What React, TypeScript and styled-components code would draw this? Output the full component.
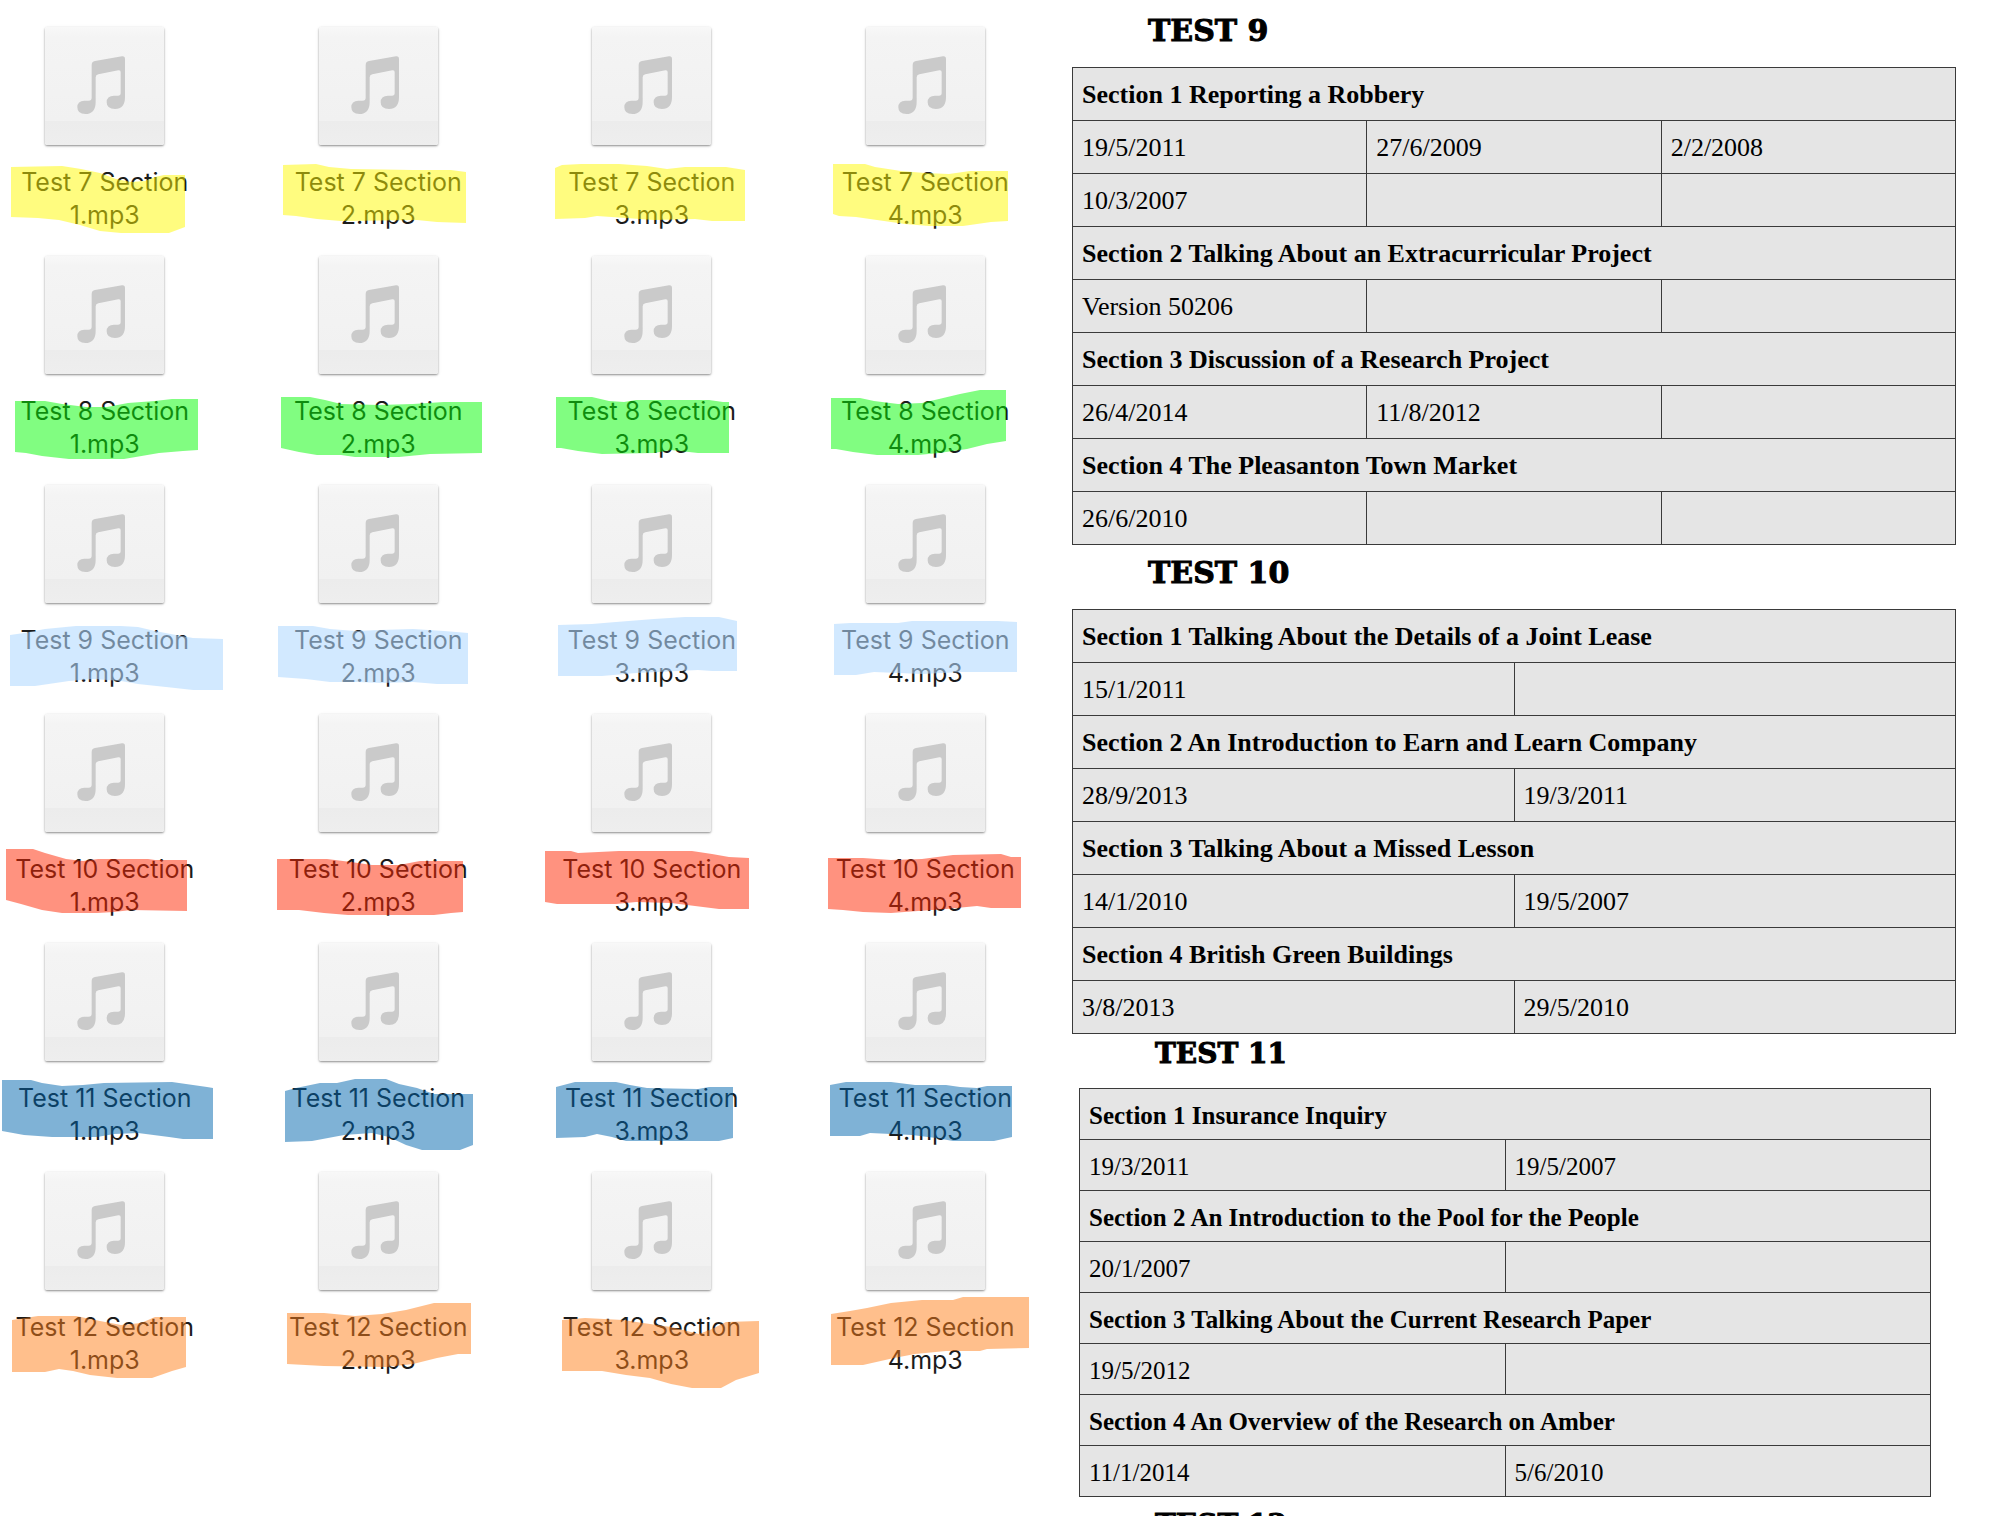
import React from 'react';
import styled, { createGlobalStyle } from 'styled-components';

const GlobalStyle = createGlobalStyle`
  *, *::before, *::after { box-sizing: border-box; }
  body { margin: 0; background: #ffffff; }
`;

const Page = styled.main`
  display: grid;
  grid-template-columns: 1030fr 884fr;
  column-gap: 42px;
  height: 100vh;
  padding-right: 45px;
  overflow: hidden;
  background: #ffffff;
`;

const FileGrid = styled.ul`
  display: grid;
  grid-template-columns: repeat(4, minmax(0, 1fr));
  gap: 24px 64px;
  align-content: start;
  margin: 0;
  padding: 27px 0 0;
  list-style: none;
`;

const FileTile = styled.li`
  position: relative;
  display: flex;
  flex-direction: column;
  align-items: center;
  gap: 21px;
`;

const Thumbnail = styled.div`
  width: 119px;
  height: 118px;
  border-radius: 2px;
  background: linear-gradient(
    to bottom,
    #f8f8f8 0,
    #f4f4f4 10px,
    #f1f1f1 94px,
    #ececec 94px,
    #eeeeee 118px
  );
  box-shadow: 0 1px 2px rgba(0, 0, 0, 0.4), 0 1px 4px rgba(0, 0, 0, 0.08);
`;

const NoteDrawing = styled.svg`
  display: block;
  width: 100%;
  height: 100%;
  fill: #cacaca;
`;

const FileName = styled.span`
  color: #1b1b1b;
  font: 400 25px/33px Inter, 'Liberation Sans', sans-serif;
  text-align: center;
`;

const FileLine = styled.span`
  display: block;
  white-space: nowrap;
`;

const Marker = styled.svg<{ $ink: string }>`
  position: absolute;
  top: 0;
  left: 50%;
  width: 1px;
  height: 1px;
  overflow: visible;
  pointer-events: none;
  fill: ${(p) => p.$ink};
`;

const Schedule = styled.div`
  display: flex;
  flex-direction: column;
  gap: 10px;
  padding-top: 13px;
`;

const Sheet = styled.section<{ $narrow: boolean }>`
  padding: ${(p) => (p.$narrow ? '0 25px 0 7px' : '0')};
`;

const TightGroup = styled.div`
  display: flex;
  flex-direction: column;
  gap: 2px;
`;

const SheetTitle = styled.h2<{ $narrow: boolean }>`
  margin: 0 0 ${(p) => (p.$narrow ? 16 : 18)}px;
  padding-left: 76px;
  color: #000000;
  font: 700 ${(p) => (p.$narrow ? 28 : 30)}px/36px 'DejaVu Serif', serif;
  -webkit-text-stroke: 1px #000000;
`;

const DateTable = styled.table<{ $narrow: boolean }>`
  width: 100%;
  table-layout: fixed;
  border-collapse: collapse;
  border: 1px solid #111111;
  background: #e5e5e5;
  color: #000000;
  font-family: 'Liberation Serif', 'Times New Roman', serif;
  font-size: ${(p) => (p.$narrow ? 25 : 26)}px;
  line-height: ${(p) => (p.$narrow ? 29 : 30)}px;

  th,
  td {
    height: ${(p) => (p.$narrow ? 51 : 53)}px;
    padding: ${(p) => (p.$narrow ? '12px 9px 9px' : '12px 9px 10px')};
    border: 1px solid #3a3a3a;
    text-align: left;
  }
`;

const SectionCell = styled.th`
  font-weight: 700;
`;

const DateCell = styled.td`
  font-weight: 400;
`;

type FileRow = { test: number; ink: string; strokes: string[] };

/* Highlighter outlines; x is measured from the tile's centre, y from its top. */
const fileRows: FileRow[] = [
  {
    test: 7,
    ink: 'rgba(255, 250, 0, 0.5)',
    strokes: [
      '-94,140 -43,139 -24,142 -5,146 11,152 26,155 40,154 50,150 59,148 80,148 80,200 64,206 16,206 -5,204 -25,198 -46,193 -67,191 -94,190',
      '-95,138 -62,137 -49,140 -27,142 35,143 73,143 88,145 88,196 59,195 39,193 -37,194 -61,192 -82,189 -95,188',
      '-97,141 -90,138 -71,137 -33,137 -5,139 15,142 33,140 74,140 93,143 93,194 60,194 43,192 2,193 -26,191 -55,189 -67,191 -97,192',
      '-92,137 -60,137 -50,140 -24,144 0,146 24,147 45,144 83,144 83,194 66,195 38,199 4,199 -20,197 -48,193 -69,190 -86,189 -92,187',
    ],
  },
  {
    test: 8,
    ink: 'rgba(4, 252, 4, 0.5)',
    strokes: [
      '-90,145 -60,145 -43,148 -19,151 2,151 23,147 50,145 67,143 93,143 93,194 78,195 54,197 19,203 -36,203 -63,200 -79,197 -90,196',
      '-97,141 -68,141 -53,144 -37,148 1,149 35,148 66,146 104,146 104,197 52,198 21,201 -23,201 -37,199 -61,199 -79,196 -97,192',
      '-96,141 -60,141 -43,145 -28,146 -16,144 57,144 71,146 77,146 77,197 46,197 19,194 2,197 -50,198 -74,195 -91,192 -96,192',
      '-94,142 -65,142 -51,145 -27,148 -3,147 14,143 35,138 55,134 81,134 81,185 62,188 42,193 14,197 -7,199 -48,199 -72,196 -89,193 -94,193',
    ],
  },
  {
    test: 9,
    ink: 'rgba(178, 217, 255, 0.58)',
    strokes: [
      '-95,150 -81,148 -60,144 -29,141 16,141 33,142 50,146 71,150 88,153 118,154 118,205 88,205 61,202 33,199 16,196 -12,194 -36,196 -70,201 -95,201',
      '-100,141 -65,141 -48,144 -23,146 1,145 35,144 66,146 90,148 90,199 59,199 35,197 4,198 -20,197 -48,197 -72,194 -100,192',
      '-94,140 -60,139 -36,137 2,134 33,132 67,132 85,136 85,186 60,186 46,185 26,186 -16,188 -50,191 -94,191',
      '-91,139 -75,138 -27,138 -13,136 73,136 92,137 92,187 38,187 -3,189 -51,187 -69,190 -91,190',
    ],
  },
  {
    test: 10,
    ink: 'rgba(255, 38, 0, 0.5)',
    strokes: [
      '-99,135 -72,135 -60,139 -39,145 -22,147 -7,145 43,145 50,146 82,146 82,197 26,196 9,198 -8,199 -43,199 -63,196 -84,190 -99,186',
      '-101,145 -51,145 -27,148 -6,151 21,151 42,147 85,147 85,198 73,199 56,201 -30,201 -54,199 -79,196 -101,196',
      '-107,137 -81,137 -74,139 -33,137 40,137 60,140 77,143 97,144 97,195 67,195 43,192 19,189 -16,188 -36,190 -95,190 -107,188',
      '-97,144 -62,144 -34,146 -3,145 28,141 76,140 86,143 96,143 96,194 66,194 52,192 21,195 -7,197 -34,199 -62,198 -82,196 -97,195',
    ],
  },
  {
    test: 11,
    ink: 'rgba(0, 101, 173, 0.5)',
    strokes: [
      '-103,137 -74,137 -63,140 -43,143 -22,142 -1,140 67,139 88,142 102,144 108,145 108,196 78,196 64,194 33,190 9,191 -8,194 -53,194 -81,192 -103,188',
      '-93,148 -82,145 -58,140 -41,140 -23,136 8,136 21,141 39,145 56,151 95,151 95,202 82,207 44,207 28,202 11,194 -6,190 -34,192 -66,198 -93,199',
      '-96,144 -77,139 -36,139 -22,142 -5,145 46,146 57,144 81,144 81,195 67,198 -26,198 -40,194 -55,191 -67,194 -96,195',
      '-95,142 -79,139 -34,139 -10,142 21,142 35,144 52,145 62,143 87,143 87,194 69,198 28,198 11,195 -13,192 -55,190 -65,193 -95,193',
    ],
  },
  {
    test: 12,
    ink: 'rgba(255, 127, 26, 0.5)',
    strokes: [
      '-93,148 -67,144 -29,144 -5,149 16,153 36,151 50,145 81,145 81,195 67,199 47,206 12,206 -15,203 -32,199 -46,197 -60,200 -93,200',
      '-91,141 -54,141 -23,144 4,142 28,138 56,131 93,131 93,182 80,182 59,186 35,192 8,195 -54,194 -91,192',
      '-90,148 -67,146 -29,148 -9,151 19,155 47,162 60,157 74,150 107,149 107,201 84,208 69,216 40,216 19,212 -2,206 -26,203 -50,199 -90,199',
      '-94,142 -75,139 -58,136 -34,131 -3,128 28,128 38,125 104,125 104,176 62,177 55,179 21,179 -10,182 -31,186 -62,193 -94,193',
    ],
  },
];

type SheetData = {
  title: string;
  columns: number;
  narrow?: boolean;
  sections: { name: string; rows: string[][] }[];
};

const test9: SheetData = {
  title: 'TEST 9',
  columns: 3,
  sections: [
    { name: 'Section 1 Reporting a Robbery', rows: [['19/5/2011', '27/6/2009', '2/2/2008'], ['10/3/2007']] },
    { name: 'Section 2 Talking About an Extracurricular Project', rows: [['Version 50206']] },
    { name: 'Section 3 Discussion of a Research Project', rows: [['26/4/2014', '11/8/2012']] },
    { name: 'Section 4 The Pleasanton Town Market', rows: [['26/6/2010']] },
  ],
};

const test10: SheetData = {
  title: 'TEST 10',
  columns: 2,
  sections: [
    { name: 'Section 1 Talking About the Details of a Joint Lease', rows: [['15/1/2011']] },
    { name: 'Section 2 An Introduction to Earn and Learn Company', rows: [['28/9/2013', '19/3/2011']] },
    { name: 'Section 3 Talking About a Missed Lesson', rows: [['14/1/2010', '19/5/2007']] },
    { name: 'Section 4 British Green Buildings', rows: [['3/8/2013', '29/5/2010']] },
  ],
};

const test11: SheetData = {
  title: 'TEST 11',
  columns: 2,
  narrow: true,
  sections: [
    { name: 'Section 1 Insurance Inquiry', rows: [['19/3/2011', '19/5/2007']] },
    { name: 'Section 2 An Introduction to the Pool for the People', rows: [['20/1/2007']] },
    { name: 'Section 3 Talking About the Current Research Paper', rows: [['19/5/2012']] },
    { name: 'Section 4 An Overview of the Research on Amber', rows: [['11/1/2014', '5/6/2010']] },
  ],
};

const test12: SheetData = { title: 'TEST 12', columns: 2, narrow: true, sections: [] };

function MusicNote() {
  return (
    <NoteDrawing viewBox="0 0 357 354" aria-hidden="true">
      <path d="M140 114 Q140 104 150 102 L231 88 Q240 87 240 96 L240 210 Q240 246 210 246 Q185 246 185 226 Q185 206 207 206 L219 206 Q227 206 227 198 L227 135 Q227 129 220 130 L160 142 Q152 144 152 151 L152 224 Q152 261 121 261 Q97 261 97 241 Q97 221 118 221 L131 221 Q140 221 140 212 Z" />
    </NoteDrawing>
  );
}

function AudioFile({ test, section, ink, stroke }: { test: number; section: number; ink: string; stroke: string }) {
  return (
    <FileTile>
      <Thumbnail>
        <MusicNote />
      </Thumbnail>
      <FileName>
        <FileLine>{`Test ${test} Section`}</FileLine>
        <FileLine>{`${section}.mp3`}</FileLine>
      </FileName>
      <Marker $ink={ink} aria-hidden="true">
        <polygon points={stroke} />
      </Marker>
    </FileTile>
  );
}

function TestSheet({ data }: { data: SheetData }) {
  const narrow = Boolean(data.narrow);
  const cells = Array.from({ length: data.columns }, (_, i) => i);
  return (
    <Sheet $narrow={narrow}>
      <SheetTitle $narrow={narrow}>{data.title}</SheetTitle>
      {data.sections.length > 0 && (
        <DateTable $narrow={narrow} aria-label={data.title}>
          {data.sections.map((section) => (
            <tbody key={section.name}>
              <tr>
                <SectionCell colSpan={data.columns} scope="rowgroup">
                  {section.name}
                </SectionCell>
              </tr>
              {section.rows.map((row, r) => (
                <tr key={r}>
                  {cells.map((c) => (
                    <DateCell key={c}>{row[c]}</DateCell>
                  ))}
                </tr>
              ))}
            </tbody>
          ))}
        </DateTable>
      )}
    </Sheet>
  );
}

export default function App() {
  return (
    <>
      <GlobalStyle />
      <Page>
        <FileGrid>
          {fileRows.map((row) =>
            row.strokes.map((stroke, i) => (
              <AudioFile key={`${row.test}-${i}`} test={row.test} section={i + 1} ink={row.ink} stroke={stroke} />
            )),
          )}
        </FileGrid>
        <Schedule>
          <TestSheet data={test9} />
          <TightGroup>
            <TestSheet data={test10} />
            <TestSheet data={test11} />
          </TightGroup>
          <TestSheet data={test12} />
        </Schedule>
      </Page>
    </>
  );
}
